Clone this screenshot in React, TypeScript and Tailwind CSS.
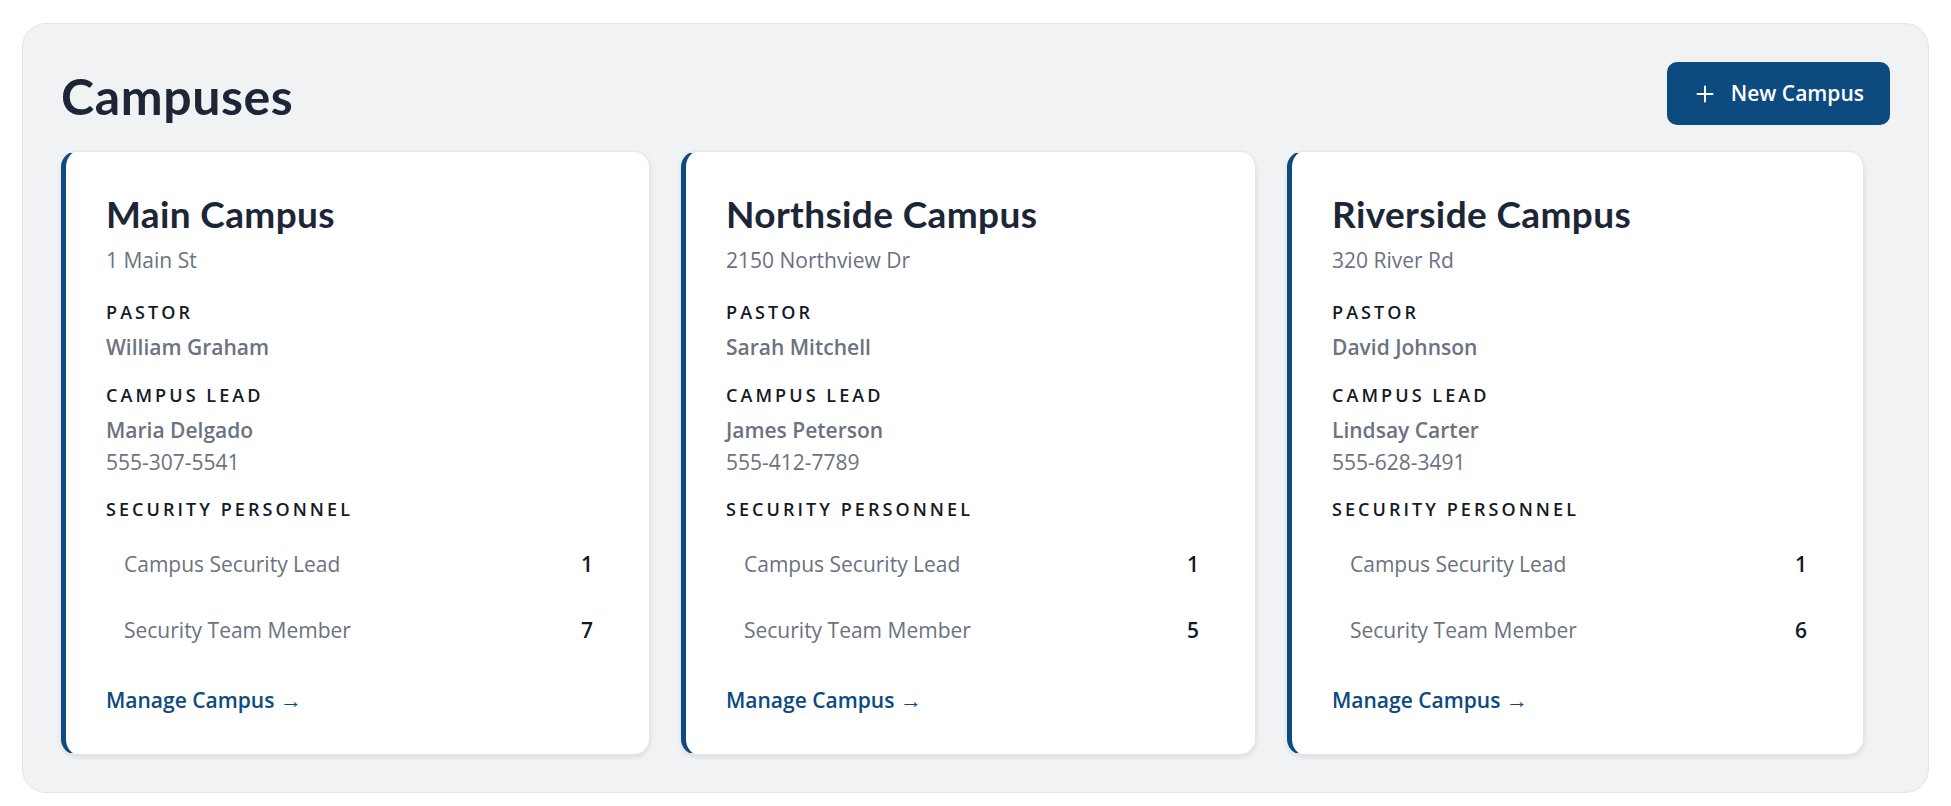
import React from "react";

type Campus = {
  name: string;
  address: string;
  pastor: string;
  lead: string;
  phone: string;
  securityLead: number;
  team: number;
};

const campuses: Campus[] = [
  { name: "Main Campus", address: "1 Main St", pastor: "William Graham", lead: "Maria Delgado", phone: "555-307-5541", securityLead: 1, team: 7 },
  { name: "Northside Campus", address: "2150 Northview Dr", pastor: "Sarah Mitchell", lead: "James Peterson", phone: "555-412-7789", securityLead: 1, team: 5 },
  { name: "Riverside Campus", address: "320 River Rd", pastor: "David Johnson", lead: "Lindsay Carter", phone: "555-628-3491", securityLead: 1, team: 6 },
];

const body = { fontFamily: '"Open Sans", "Noto Sans", sans-serif' };
const display = { fontFamily: 'Lato, "Noto Sans", sans-serif' };

function Label({ children, className = "" }: { children: React.ReactNode; className?: string }) {
  return (
    <div className={`text-[18px] leading-[24px] font-semibold uppercase tracking-[0.17em] text-[#141a26] ${className}`}>
      {children}
    </div>
  );
}

function Card({ c }: { c: Campus }) {
  return (
    <div className="flex flex-col rounded-2xl border border-[#e4e6ea] border-l-[5px] border-l-[#0c4a7f] bg-white pl-10 pr-10 pt-[40px] pb-[40px] shadow-[0_2px_5px_rgba(15,23,42,0.10)]">
      <h2 style={display} className="text-[37px] leading-[44px] font-bold text-[#1c2636] tracking-[0.01em]">
        {c.name}
      </h2>
      <div className="mt-[10px] text-[21px] leading-[28px] text-[#6b7280]">{c.address}</div>
      <Label className="mt-[26px]">Pastor</Label>
      <div className="mt-[9px] text-[21px] leading-[28px] font-semibold text-[#6b7280]">{c.pastor}</div>
      <Label className="mt-[22px]">Campus Lead</Label>
      <div className="mt-[9px] text-[21px] leading-[28px] font-semibold text-[#6b7280]">{c.lead}</div>
      <div className="mt-[4px] text-[21px] leading-[28px] text-[#6b7280]">{c.phone}</div>
      <Label className="mt-[21px]">Security Personnel</Label>
      <div className="mt-[17px] flex flex-col gap-[14px]">
        <div className="flex items-center justify-between pl-[18px] pr-4 py-3 text-[21px] leading-[28px]">
          <span className="text-[#6b7280]">Campus Security Lead</span>
          <span className="font-semibold text-[#111827]">{c.securityLead}</span>
        </div>
        <div className="flex items-center justify-between pl-[18px] pr-4 py-3 text-[21px] leading-[28px]">
          <span className="text-[#6b7280]">Security Team Member</span>
          <span className="font-semibold text-[#111827]">{c.team}</span>
        </div>
      </div>
      <a href="#" className="mt-[29px] text-[21px] leading-[28px] font-semibold text-[#0c4a7f]">
        Manage Campus <span className="text-[22px]">→</span>
      </a>
    </div>
  );
}

export default function App() {
  return (
    <div style={body} className="min-h-screen bg-white px-[22px] pt-[23px] pb-[16px]">
      <div className="rounded-[24px] border border-[#e3e5e9] bg-[#f1f2f4] px-[38px] pt-[38px] pb-[37px]">
        <div className="flex items-center justify-between">
          <h1 style={display} className="pt-[4px] text-[50px] leading-[56px] font-bold text-[#1c2636] tracking-[0.012em]">
            Campuses
          </h1>
          <button className="flex h-[63px] items-center gap-[17px] rounded-[10px] bg-[#0c4a7f] pl-[29px] pr-[26px] text-[21px] font-semibold text-white">
            <svg width="18" height="18" viewBox="0 0 18 18" fill="none" stroke="currentColor" strokeWidth="2" strokeLinecap="round">
              <path d="M9 1.5v15M1.5 9h15" />
            </svg>
            New Campus
          </button>
        </div>
        <div className="mt-[26px] grid grid-cols-[589px_575px_577px] gap-x-[31px]">
          {campuses.map((c) => (
            <Card key={c.name} c={c} />
          ))}
        </div>
      </div>
    </div>
  );
}
